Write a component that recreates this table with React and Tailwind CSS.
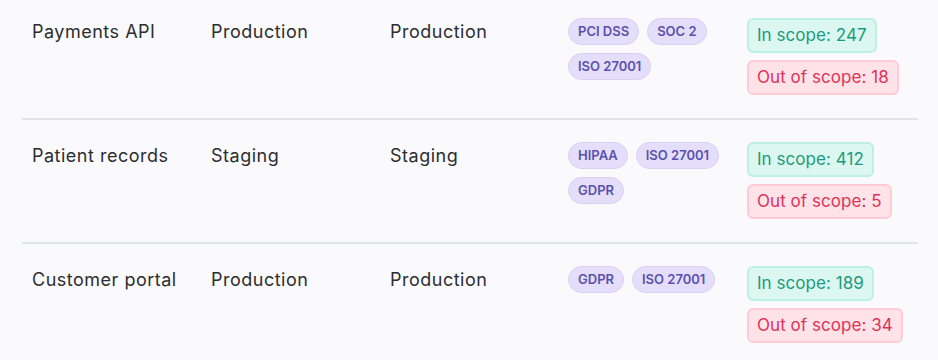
const rows = [
  {
    name: 'Payments API',
    env: 'Production',
    target: 'Production',
    tags: ['PCI DSS', 'SOC 2', 'ISO 27001'],
    inScope: 247,
    outScope: 18,
  },
  {
    name: 'Patient records',
    env: 'Staging',
    target: 'Staging',
    tags: ['HIPAA', 'ISO 27001', 'GDPR'],
    inScope: 412,
    outScope: 5,
  },
  {
    name: 'Customer portal',
    env: 'Production',
    target: 'Production',
    tags: ['GDPR', 'ISO 27001'],
    inScope: 189,
    outScope: 34,
  },
]

function Tag({ label }) {
  return (
    <span className="inline-flex items-center h-[27px] px-[9px] rounded-full bg-[#e4defa] border border-[#d8d0f6] text-[13px] font-semibold text-[#5b51ad]">
      {label}
    </span>
  )
}

export default function App() {
  return (
    <div className="min-h-screen bg-[#fafafc] text-[#2d2d31] font-['Inter',sans-serif]">
      <div className="w-[896px] ml-[22px]">
        {rows.map((row, i) => (
          <div
            key={row.name}
            className={`grid grid-cols-[179px_179px_178px_179px_181px] pb-[23px] ${
              i === 0 ? 'pt-[18px]' : 'pt-[22px]'
            } ${i < rows.length - 1 ? 'border-b-2 border-[#e1e4ea]' : ''}`}
          >
            <div className="px-[10px] text-[18px] leading-[27px] tracking-[0.5px]">{row.name}</div>
            <div className="px-[10px] text-[18px] leading-[27px] tracking-[0.5px]">{row.env}</div>
            <div className="px-[10px] text-[18px] leading-[27px] tracking-[0.5px]">{row.target}</div>
            <div className="pl-[10px] pr-[4px] flex flex-wrap gap-[8px] content-start">
              {row.tags.map((t) => (
                <Tag key={t} label={t} />
              ))}
            </div>
            <div className="px-[10px] flex flex-col items-start gap-[7px]">
              <span className="h-[35px] inline-flex items-center px-[8px] rounded-[6px] bg-[#dcf7ef] border-2 border-[#bdf0df] text-[17px] tracking-[0.05px] text-[#1d9b7e]">
                In scope: {row.inScope}
              </span>
              <span className="h-[35px] inline-flex items-center px-[8px] rounded-[6px] bg-[#ffe3e9] border-2 border-[#ffcbd6] text-[17px] tracking-[0.05px] text-[#dd3358]">
                Out of scope: {row.outScope}
              </span>
            </div>
          </div>
        ))}
      </div>
    </div>
  )
}
